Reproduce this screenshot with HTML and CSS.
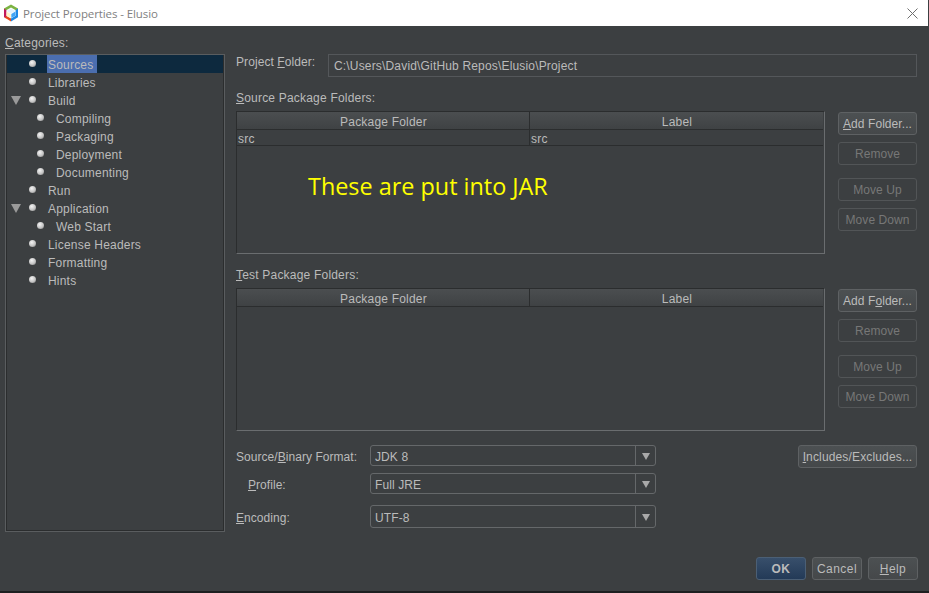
FILE: index.html
```html
<!DOCTYPE html>
<html lang="en">
<head>
  <meta charset="UTF-8" />
  <title>Project Properties - Elusio</title>
  <link rel="stylesheet" href="styles.css">
</head>
<body>
  <div class="titlebar">
    <svg class="logo" width="18" height="18" viewBox="0 0 18 18">
      <path d="M9 0.5 L16 4.6 L16 7.4 L9 3.6 L2 7.4 L2 4.6 Z" fill="#7cb342"/>
      <path d="M2 4.6 L2 13.2 L4.4 14.6 L4.4 6.2 Z" fill="#c2185b"/>
      <path d="M3 13.8 L9 17.5 L9 14.6 L4 11.8 Z" fill="#e64a19"/>
      <path d="M16 4.6 L16 13.2 L9 17.5 L9 14.6 L13.6 11.8 L13.6 6.2 Z" fill="#1e88e5"/>
      <path d="M9 4.4 L13.4 6.9 L9 9.4 L4.6 6.9 Z" fill="#e3f2fd"/>
      <path d="M4.6 7.6 L8.7 9.9 L8.7 14 L4.6 11.7 Z" fill="#fff3c4"/>
      <path d="M9.3 9.9 L13.4 7.6 L13.4 11.7 L9.3 14 Z" fill="#42a5f5"/>
    </svg>
    <span class="title">Project Properties - Elusio</span>
    <svg class="close" width="11" height="11" viewBox="0 0 11 11">
      <path d="M0.5 0.5 L10.5 10.5 M10.5 0.5 L0.5 10.5" stroke="#6f6f6f" stroke-width="1" fill="none"/>
    </svg>
  </div>

  <div class="dialog">
    <div class="content">
      <div class="side">
        <div class="side-label"><u>C</u>ategories:</div>
        <div class="tree">
          <div class="node selected"><i class="arrow none"></i><i class="dot"></i><span>Sources</span></div>
          <div class="node"><i class="arrow none"></i><i class="dot"></i><span>Libraries</span></div>
          <div class="node"><i class="arrow"></i><i class="dot"></i><span>Build</span></div>
          <div class="node child"><i class="dot"></i><span>Compiling</span></div>
          <div class="node child"><i class="dot"></i><span>Packaging</span></div>
          <div class="node child"><i class="dot"></i><span>Deployment</span></div>
          <div class="node child"><i class="dot"></i><span>Documenting</span></div>
          <div class="node"><i class="arrow none"></i><i class="dot"></i><span>Run</span></div>
          <div class="node"><i class="arrow"></i><i class="dot"></i><span>Application</span></div>
          <div class="node child"><i class="dot"></i><span>Web Start</span></div>
          <div class="node"><i class="arrow none"></i><i class="dot"></i><span>License Headers</span></div>
          <div class="node"><i class="arrow none"></i><i class="dot"></i><span>Formatting</span></div>
          <div class="node"><i class="arrow none"></i><i class="dot"></i><span>Hints</span></div>
        </div>
      </div>

      <div class="main">
        <div class="folder-row">
          <label class="folder-label">Project <u>F</u>older:</label>
          <div class="field">C:\Users\David\GitHub Repos\Elusio\Project</div>
        </div>

        <div class="section-label first"><u>S</u>ource Package Folders:</div>
        <div class="section">
          <div class="table">
            <div class="thead"><div class="col-a">Package Folder</div><div class="col-b">Label</div></div>
            <div class="trow"><div class="col-a">src</div><div class="col-b">src</div></div>
            <div class="note">These are put into JAR</div>
          </div>
          <div class="btns">
            <button class="btn"><u>A</u>dd Folder...</button>
            <button class="btn off">Remove</button>
            <button class="btn off gap">Move Up</button>
            <button class="btn off">Move Down</button>
          </div>
        </div>

        <div class="section-label second"><u>T</u>est Package Folders:</div>
        <div class="section">
          <div class="table">
            <div class="thead"><div class="col-a">Package Folder</div><div class="col-b">Label</div></div>
          </div>
          <div class="btns">
            <button class="btn">Add F<u>o</u>lder...</button>
            <button class="btn off">Remove</button>
            <button class="btn off gap">Move Up</button>
            <button class="btn off">Move Down</button>
          </div>
        </div>

        <div class="format">
          <div class="combos">
            <div class="combo-row">
              <label class="combo-label">Source/<u>B</u>inary Format:</label>
              <div class="combo"><span>JDK 8</span><i class="combo-arrow"></i></div>
            </div>
            <div class="combo-row">
              <label class="combo-label indent"><u>P</u>rofile:</label>
              <div class="combo"><span>Full JRE</span><i class="combo-arrow"></i></div>
            </div>
            <div class="combo-row tall">
              <label class="combo-label"><u>E</u>ncoding:</label>
              <div class="combo"><span>UTF-8</span><i class="combo-arrow"></i></div>
            </div>
          </div>
          <button class="btn wide"><u>I</u>ncludes/Excludes...</button>
        </div>
      </div>
    </div>

    <div class="footer">
      <button class="btn action primary">OK</button>
      <button class="btn action">Cancel</button>
      <button class="btn action"><u>H</u>elp</button>
    </div>
  </div>
  <div class="taskbar"></div>
</body>
</html>
```

FILE: styles.css
```css
html, body {
  margin: 0;
  height: 593px;
  overflow: hidden;
}
body {
  font-family: "Liberation Sans", Arial, sans-serif;
  font-size: 12px;
  letter-spacing: 0.2px;
  color: #bbbbbb;
  background: #3c3f41;
}
u {
  text-underline-offset: 1px;
}
.titlebar {
  height: 26px;
  width: 928px;
  background: #ffffff;
  display: flex;
  align-items: center;
  padding-left: 2px;
  box-sizing: border-box;
}
.logo {
  flex: none;
}
.title {
  margin-left: 3px;
  color: #7f7f7f;
  font-family: "Open Sans", sans-serif;
  font-size: 11.5px;
  letter-spacing: -0.1px;
}
.close {
  margin-left: auto;
  margin-right: 10px;
}
.dialog {
  height: 565px;
  display: flex;
  flex-direction: column;
}
.content {
  display: flex;
  flex: 1;
}

/* left tree */
.side {
  margin-left: 5px;
  width: 220px;
}
.side-label {
  margin-top: 10px;
  height: 18px;
  line-height: 14px;
}
.tree {
  height: 478px;
  box-sizing: border-box;
  border: 1px solid #5a5d5f;
  box-shadow: inset 0 0 0 1px #2b2d2e;
}
.node {
  height: 18px;
  margin-left: 1px;
  margin-right: 1px;
  display: flex;
  align-items: center;
}
.node.selected {
  background: #0d293e;
}
.node span {
  padding: 2px 4px 0 1px;
  height: 18px;
  box-sizing: border-box;
  line-height: 16px;
}
.node.selected span {
  background: #4b6eaf;
}
.arrow {
  width: 0;
  height: 0;
  margin-left: 4px;
  border-left: 5px solid transparent;
  border-right: 5px solid transparent;
  border-top: 9px solid #9a9a9a;
}
.arrow.none {
  border-top-color: transparent;
}
.dot {
  width: 7px;
  height: 7px;
  margin: -2px 11px 0 8px;
  border-radius: 50%;
  background: radial-gradient(circle at 40% 35%, #f4f4f4, #c4c4c4 55%, #777777);
}
.node.child .dot {
  margin-left: 30px;
}

/* right part */
.main {
  margin-left: 11px;
  width: 681px;
}
.folder-row {
  display: flex;
  margin-top: 28px;
}
.folder-label {
  width: 92px;
  padding-top: 1px;
  line-height: 15px;
  letter-spacing: 0.08px;
}
.field {
  width: 589px;
  height: 23px;
  box-sizing: border-box;
  border: 1px solid #54575a;
  padding-left: 5px;
  line-height: 22px;
  letter-spacing: 0.17px;
}
.section-label {
  height: 14px;
  line-height: 14px;
}
.section-label.first {
  margin-top: 14px;
  margin-bottom: 6px;
}
.section-label.second {
  margin-top: 14px;
  margin-bottom: 6px;
}
.section {
  display: flex;
}
.table {
  position: relative;
  width: 589px;
  height: 143px;
  box-sizing: border-box;
  border: 1px solid #2b2d2e;
  border-right-color: #6a6d6f;
  border-bottom-color: #6a6d6f;
}
.thead, .trow {
  display: flex;
  box-sizing: border-box;
  border-bottom: 1px solid #2b2d2e;
  margin-right: 1px;
}
.thead {
  height: 18px;
  line-height: 17px;
  text-align: center;
  background: linear-gradient(#4b4e50, #3f4244);
}
.trow {
  height: 16px;
  line-height: 14px;
}
.col-a {
  width: 291px;
  border-right: 1px solid #2b2d2e;
  padding: 2px 0 0 1px;
}
.col-b {
  flex: 1;
  padding: 2px 0 0 1px;
}
.note {
  position: absolute;
  left: 71px;
  top: 59px;
  color: #ffff00;
  font-family: "Open Sans", sans-serif;
  font-size: 23.4px;
  line-height: 30px;
  letter-spacing: 0;
  white-space: nowrap;
}
.btns {
  display: flex;
  flex-direction: column;
  gap: 7px;
  margin-left: 13px;
  padding-top: 1px;
}
.btns .btn {
  width: 79px;
}
.btns .gap {
  margin-top: 6px;
}
.btn {
  height: 23px;
  padding: 0;
  box-sizing: border-box;
  border: 1px solid #5e6163;
  border-radius: 3px;
  background: linear-gradient(#4c5052, #45484a);
  color: #bbbbbb;
  font: inherit;
  letter-spacing: 0.07px;
  white-space: nowrap;
}
.btn.off {
  background: transparent;
  border-color: #525557;
  color: #777777;
}

/* format rows */
.format {
  display: flex;
  justify-content: space-between;
  margin-top: 14px;
}
.combos {
  display: flex;
  flex-direction: column;
  gap: 7px;
}
.combo-row {
  display: flex;
  align-items: center;
}
.combo-label {
  width: 134px;
  padding-top: 2px;
  letter-spacing: 0.05px;
}
.combo-label.indent {
  padding-left: 12px;
  width: 122px;
}
.combo {
  width: 286px;
  height: 21px;
  box-sizing: border-box;
  border: 1px solid #65686a;
  border-radius: 3px;
  display: flex;
  align-items: center;
  padding-left: 4px;
}
.combo-row.tall {
  margin-top: 4px;
}
.combo-row.tall .combo {
  height: 23px;
}
.combo span {
  flex: 1;
  padding-top: 2px;
  letter-spacing: 0.1px;
}
.combo-arrow {
  width: 19px;
  align-self: stretch;
  border-left: 1px solid #65686a;
  position: relative;
}
.combo-arrow::after {
  content: "";
  position: absolute;
  left: 6px;
  top: 50%;
  margin-top: -3px;
  border-left: 4px solid transparent;
  border-right: 4px solid transparent;
  border-top: 7px solid #a9a9a9;
}
.btn.wide {
  width: 119px;
  letter-spacing: 0.15px;
}

/* bottom buttons */
.footer {
  display: flex;
  justify-content: flex-end;
  gap: 6px;
  padding-right: 11px;
  margin-bottom: 11px;
}
.btn.action {
  width: 50px;
  letter-spacing: 0.45px;
}
.btn.primary {
  background: linear-gradient(#384f6b, #233a57);
  border-color: #4b5f75;
  font-weight: bold;
}
.taskbar {
  position: absolute;
  left: 0;
  top: 591px;
  width: 929px;
  height: 2px;
  background: #1e1f20;
}
```
